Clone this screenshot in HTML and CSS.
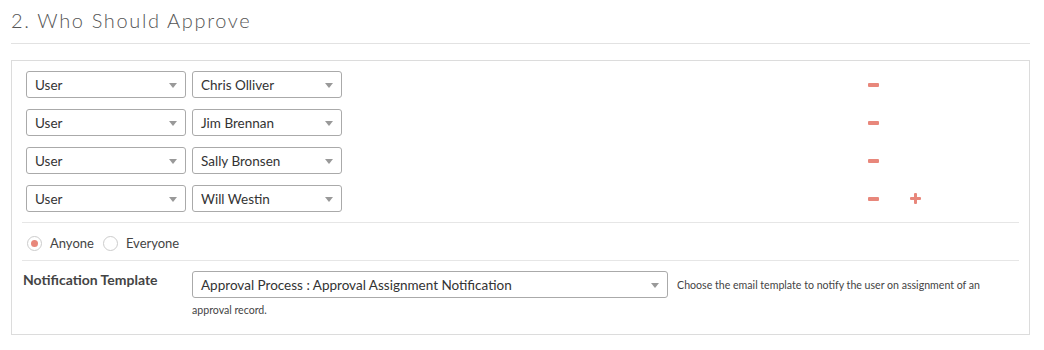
FILE: index.html
```html
<!DOCTYPE html>
<html lang="en">
<head>
    <meta charset="UTF-8">
    <title>Who Should Approve</title>
    <link rel="stylesheet" href="styles.css">
</head>
<body>
    <div class="section">
        <h2 class="section-title">2. Who Should Approve</h2>

        <div class="panel">
            <div class="approvers">
                <div class="approver-row">
                    <div class="select type-select"><span>User</span></div>
                    <div class="select user-select"><span>Chris Olliver</span></div>
                    <div class="actions"><span class="btn-remove"></span></div>
                </div>
                <div class="approver-row">
                    <div class="select type-select"><span>User</span></div>
                    <div class="select user-select"><span>Jim Brennan</span></div>
                    <div class="actions"><span class="btn-remove"></span></div>
                </div>
                <div class="approver-row">
                    <div class="select type-select"><span>User</span></div>
                    <div class="select user-select"><span>Sally Bronsen</span></div>
                    <div class="actions"><span class="btn-remove"></span></div>
                </div>
                <div class="approver-row">
                    <div class="select type-select"><span>User</span></div>
                    <div class="select user-select"><span>Will Westin</span></div>
                    <div class="actions">
                        <span class="btn-remove"></span>
                        <span class="btn-add"></span>
                    </div>
                </div>
            </div>

            <!-- who has to approve -->
            <div class="radio-row">
                <label class="radio checked"><span class="radio-circle"></span>Anyone</label>
                <label class="radio"><span class="radio-circle"></span>Everyone</label>
            </div>

            <div class="template-row">
                <div class="template-label">Notification Template</div>
                <div class="template-field">
                    <div class="select template-select"><span>Approval Process : Approval Assignment Notification</span></div>
                    <span class="help-text">Choose the email template to notify the user on assignment of an approval record.</span>
                </div>
            </div>
        </div>
    </div>
</body>
</html>
```

FILE: styles.css
```css
body {
    margin: 0;
    font-family: Lato, "Open Sans", sans-serif;
    color: #333;
    background: #fff;
}

.section {
    padding: 0 14px 0 11px;
}

.section-title {
    margin: 0;
    padding: 8px 0 11px 0;
    font-size: 20px;
    font-weight: 300;
    letter-spacing: 1.65px;
    color: #555;
    border-bottom: 1px solid #e2e2e2;
}

.panel {
    margin-top: 16px;
    border: 1px solid #dcdcdc;
    padding: 10px 10px 14px 10px;
}

.approvers {
    display: flex;
    flex-direction: column;
    gap: 11px;
    padding: 0 4px 10px 4px;
    border-bottom: 1px solid #e6e6e6;
}

.approver-row {
    display: flex;
    align-items: center;
    gap: 6px;
}

.select {
    position: relative;
    box-sizing: border-box;
    height: 27px;
    display: flex;
    align-items: center;
    padding: 0 24px 0 8px;
    border: 1px solid #aaa;
    border-radius: 3px;
    font-size: 13.5px;
    color: #333;
    background: #fff;
    white-space: nowrap;
}

.select::after {
    content: "";
    position: absolute;
    right: 8px;
    top: 11px;
    border-left: 4px solid transparent;
    border-right: 4px solid transparent;
    border-top: 5px solid #999;
}

.type-select {
    width: 160px;
}

.user-select {
    width: 150px;
}

.actions {
    display: flex;
    align-items: center;
    margin-left: 520px;
    gap: 31px;
}

.btn-remove {
    display: block;
    width: 11px;
    height: 4px;
    background: #e8877b;
    border-radius: 1px;
}

.btn-add {
    position: relative;
    display: block;
    width: 11px;
    height: 11px;
}

.btn-add::before,
.btn-add::after {
    content: "";
    position: absolute;
    background: #e8877b;
    border-radius: 1px;
}

.btn-add::before {
    left: 0;
    top: 4px;
    width: 11px;
    height: 3px;
}

.btn-add::after {
    left: 4px;
    top: 0;
    width: 3px;
    height: 11px;
}

.radio-row {
    display: flex;
    align-items: center;
    gap: 9px;
    padding: 12px 5px 9px 5px;
    border-bottom: 1px solid #e6e6e6;
    font-size: 13px;
    color: #444;
}

.radio {
    display: flex;
    align-items: center;
    gap: 8px;
}

.radio-circle {
    position: relative;
    box-sizing: border-box;
    width: 15px;
    height: 15px;
    border: 1px solid #ccc;
    border-radius: 50%;
    background: #fff;
}

.radio.checked .radio-circle::after {
    content: "";
    position: absolute;
    left: 3px;
    top: 3px;
    width: 7px;
    height: 7px;
    border-radius: 50%;
    background: #e8877b;
}

.template-row {
    display: flex;
    padding: 10px 0 0 1px;
}

.template-label {
    width: 169px;
    font-size: 14px;
    line-height: 18px;
    font-weight: 700;
    color: #444;
}

.template-field {
    width: 800px;
    line-height: 19px;
}

.template-select {
    display: inline-flex;
    vertical-align: middle;
    width: 476px;
    margin-right: 5px;
    line-height: normal;
}

.help-text {
    font-size: 10.6px;
    color: #444;
}
```
